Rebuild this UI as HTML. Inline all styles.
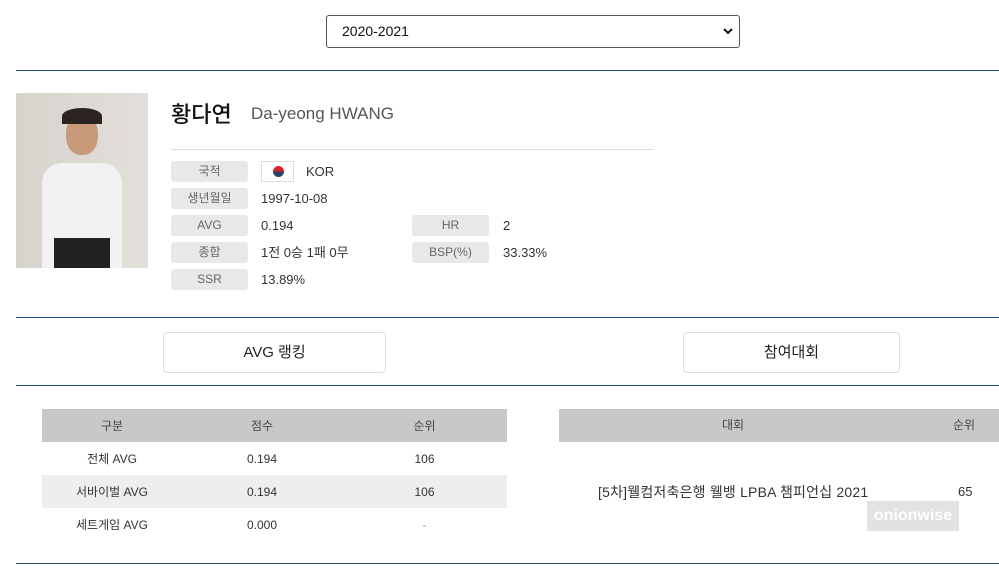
<!DOCTYPE html>
<html><head><meta charset="utf-8"><style>
*{margin:0;padding:0;box-sizing:border-box}
body{width:999px;height:571px;overflow:hidden;background:#fff;font-family:"Liberation Sans","Noto Sans CJK KR",sans-serif;color:#333;position:relative;font-size:13px}
.a{position:absolute}
.line{position:absolute;left:16px;right:0;height:1px;background:#1d4f7a}
.lab{position:absolute;width:77px;height:21px;background:#e8e8e8;border-radius:3px;color:#666;font-size:12px;text-align:center;line-height:21px}
.val{position:absolute;font-size:13px;line-height:21px;color:#333}
.btn{position:absolute;height:41px;border:1px solid #ddd;border-radius:4px;text-align:center;line-height:40px;font-size:15px;color:#222}
table{border-collapse:collapse;position:absolute;font-size:12px}
td,th{height:33px;text-align:center;font-weight:normal}
th{background:#c8c8c8;color:#444}
</style></head><body>
<div class="a" style="left:326px;top:15px;width:414px;height:33px;border:1px solid #555;border-radius:3px;font-size:14px;line-height:31px;padding-left:15px;color:#111">2020-2021
<svg style="position:absolute;right:6px;top:11px" width="10" height="8"><path d="M1 2 L5 6 L9 2" stroke="#111" stroke-width="2" fill="none"/></svg></div>
<div class="line" style="top:70px"></div>
<div class="a" style="left:16px;top:93px;width:132px;height:175px;background:linear-gradient(90deg,#d6d2cc,#e3e0db)">
<div class="a" style="left:26px;top:70px;width:80px;height:105px;background:#f2f2f2;border-radius:20px 20px 0 0"></div>
<div class="a" style="left:50px;top:22px;width:32px;height:40px;background:#c89a7a;border-radius:45%"></div>
<div class="a" style="left:46px;top:15px;width:40px;height:16px;background:#2a2320;border-radius:50% 50% 0 0"></div>
<div class="a" style="left:38px;top:145px;width:56px;height:30px;background:#222"></div></div>
<div class="a" style="left:171px;top:97px;font-size:22px;color:#111;font-weight:500">황다연</div>
<div class="a" style="left:251px;top:104px;font-size:17px;color:#555">Da-yeong HWANG</div>
<div class="a" style="left:171px;top:149px;width:483px;height:1px;background:#ddd"></div>
<div class="lab" style="left:171px;top:161px">국적</div>
<div class="a" style="left:261px;top:161px;width:33px;height:21px;border:1px solid #ddd;background:#fff"><div class="a" style="left:11px;top:4px;width:11px;height:11px;border-radius:50%;background:linear-gradient(#d22 50%,#246 50%)"></div></div>
<div class="val" style="left:306px;top:161px">KOR</div>
<div class="lab" style="left:171px;top:188px">생년월일</div><div class="val" style="left:261px;top:188px">1997-10-08</div>
<div class="lab" style="left:171px;top:215px">AVG</div><div class="val" style="left:261px;top:215px">0.194</div>
<div class="lab" style="left:412px;top:215px">HR</div><div class="val" style="left:503px;top:215px">2</div>
<div class="lab" style="left:171px;top:242px">종합</div><div class="val" style="left:261px;top:242px">1전 0승 1패 0무</div>
<div class="lab" style="left:412px;top:242px">BSP(%)</div><div class="val" style="left:503px;top:242px">33.33%</div>
<div class="lab" style="left:171px;top:269px">SSR</div><div class="val" style="left:261px;top:269px">13.89%</div>
<div class="line" style="top:317px"></div>
<div class="btn" style="left:163px;top:332px;width:223px">AVG 랭킹</div>
<div class="btn" style="left:683px;top:332px;width:217px">참여대회</div>
<div class="line" style="top:385px"></div>
<table style="left:42px;top:409px;width:465px">
<tr><th style="width:140px">구분</th><th style="width:160px">점수</th><th>순위</th></tr>
<tr><td>전체 AVG</td><td>0.194</td><td>106</td></tr>
<tr style="background:#eee"><td>서바이벌 AVG</td><td>0.194</td><td>106</td></tr>
<tr><td>세트게임 AVG</td><td>0.000</td><td style="color:#999">-</td></tr>
</table>
<div class="a" style="left:559px;top:409px;width:440px;height:33px;background:#c8c8c8;font-size:12px;color:#444;line-height:33px"><span class="a" style="left:163px">대회</span><span class="a" style="left:394px">순위</span></div>
<div class="a" style="left:598px;top:482px;font-size:14px;letter-spacing:0.2px">[5차]웰컴저축은행 웰뱅 LPBA 챔피언십 2021</div>
<div class="a" style="left:958px;top:484px;font-size:13px">65</div>
<div class="a" style="left:867px;top:501px;width:92px;height:30px;background:#e2e2e2;color:#fff;font-size:16px;font-weight:bold;line-height:30px;text-align:center">onionwise</div>
<div class="line" style="top:563px"></div>
</body></html>
